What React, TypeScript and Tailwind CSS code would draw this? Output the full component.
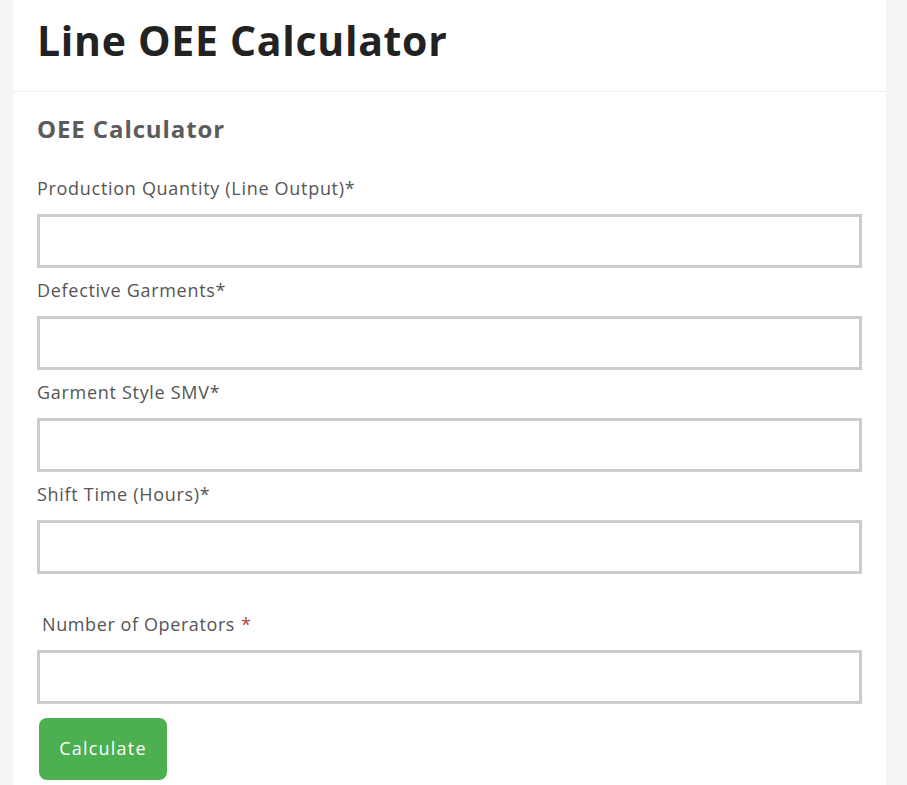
import React from "react";

const fields = [
  "Production Quantity (Line Output)*",
  "Defective Garments*",
  "Garment Style SMV*",
  "Shift Time (Hours)*",
];

export default function App() {
  return (
    <div
      className="min-h-screen w-full bg-[#f4f4f4]"
      style={{ fontFamily: '"Open Sans", "DejaVu Sans", sans-serif' }}
    >
      <div className="ml-[13px] w-[873px] min-h-[800px] bg-white">
        <div className="h-[92px] border-b border-[#eeeeee] px-[24px] flex items-center">
          <h1 className="text-[41px] font-bold text-[#222222] leading-none tracking-[0.7px] -mt-[10px]">
            Line OEE Calculator
          </h1>
        </div>
        <div className="px-[24px]">
          <div className="h-[74px] flex items-center">
            <h2 className="text-[24px] font-bold text-[#5b5b5b] leading-none tracking-[0.9px]">
              OEE Calculator
            </h2>
          </div>
          {fields.map((f) => (
            <div key={f}>
              <div className="h-[48px] flex items-center text-[18px] tracking-[0.7px] text-[#555555] -mt-[2px] mb-[2px]">
                {f}
              </div>
              <input
                type="text"
                className="block w-full h-[54px] border-[3px] border-[#cccccc] bg-white outline-none"
              />
            </div>
          ))}
          <div className="h-[28px]" />
          <div className="h-[48px] flex items-center pl-[5px] text-[18px] tracking-[0.6px] text-[#555555] -mt-[2px] mb-[2px]">
            <span>Number of Operators</span>
            <span className="ml-[6px] text-[#a94442]">*</span>
          </div>
          <input
            type="text"
            className="block w-full h-[54px] border-[3px] border-[#cccccc] bg-white outline-none"
          />
          <button className="mt-[14px] ml-[2px] w-[128px] h-[62px] rounded-[8px] bg-[#4caf50] text-white text-[18px] tracking-[1.2px] pb-[1px]">
            Calculate
          </button>
        </div>
      </div>
    </div>
  );
}
